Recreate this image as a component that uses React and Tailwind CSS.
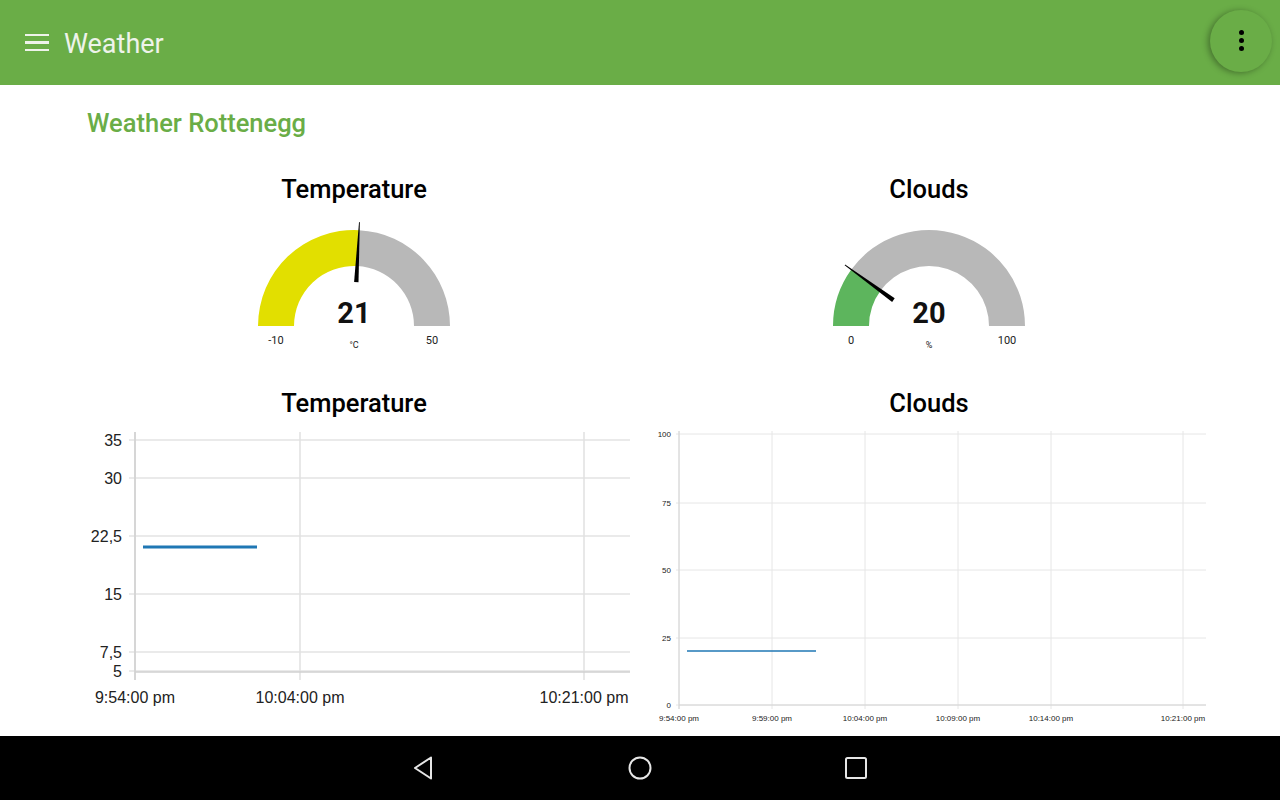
import React from 'react';

const polar = (cx, cy, r, deg) => {
  const a = (deg * Math.PI) / 180;
  return [cx + r * Math.cos(a), cy - r * Math.sin(a)];
};

const band = (cx, cy, r1, r2, from, to) => {
  const [ax, ay] = polar(cx, cy, r2, from);
  const [bx, by] = polar(cx, cy, r2, to);
  const [cx2, cy2] = polar(cx, cy, r1, to);
  const [dx, dy] = polar(cx, cy, r1, from);
  return `M${ax} ${ay} A${r2} ${r2} 0 0 1 ${bx} ${by} L${cx2} ${cy2} A${r1} ${r1} 0 0 0 ${dx} ${dy} Z`;
};

const needle = (cx, cy, deg) => {
  const a = (deg * Math.PI) / 180;
  const ux = Math.cos(a), uy = -Math.sin(a);
  const px = -uy, py = ux;
  const ix = cx + 44 * ux, iy = cy + 44 * uy;
  const ox = cx + 104 * ux, oy = cy + 104 * uy;
  return `${ix + 2.2 * px},${iy + 2.2 * py} ${ox + 0.4 * px},${oy + 0.4 * py} ${ox - 0.4 * px},${oy - 0.4 * py} ${ix - 2.2 * px},${iy - 2.2 * py}`;
};

const Gauge = ({ title, value, min, max, unit, color }) => {
  const frac = (value - min) / (max - min);
  const deg = 180 - frac * 180;
  return (
    <div className="flex flex-col items-center">
      <h2 className="text-[25.5px] font-medium text-black leading-[30px] h-[30px]">{title}</h2>
      <svg width="240" height="135" viewBox="0 0 240 135" className="mt-[16px]">
        <path d={band(120, 106, 60, 96, 180, deg)} fill={color} />
        <path d={band(120, 106, 60, 96, deg, 0)} fill="#b8b8b8" />
        <polygon points={needle(120, 106, deg)} fill="#000" />
        <text x="120" y="103" textAnchor="middle" fontSize="29" fontWeight="700" fill="#111" fontFamily="Roboto, sans-serif">{value}</text>
        <text x="42" y="124" textAnchor="middle" fontSize="11" fill="#222" fontFamily="Roboto, sans-serif">{min}</text>
        <text x="198" y="124" textAnchor="middle" fontSize="11" fill="#222" fontFamily="Roboto, sans-serif">{max}</text>
        <text x="120" y="128" textAnchor="middle" fontSize="9" fill="#222" fontFamily="Roboto, sans-serif">{unit}</text>
      </svg>
    </div>
  );
};

const TempChart = () => {
  const rows = [[440, '35'], [478, '30'], [536, '22,5'], [594, '15'], [652, '7,5'], [671, '5']];
  const cols = [[135, '9:54:00 pm'], [300, '10:04:00 pm'], [584, '10:21:00 pm']];
  return (
    <svg width="555" height="295" viewBox="80 420 555 295" fontFamily="'Liberation Sans', Arial, sans-serif">
      {rows.map(([y, t]) => (
        <g key={t}>
          <line x1="129" x2="630" y1={y} y2={y} stroke="#e3e3e3" strokeWidth="1.5" />
          <text x="122" y={y + 6} textAnchor="end" fontSize="16" fill="#222">{t}</text>
        </g>
      ))}
      {cols.map(([x, t]) => (
        <g key={t}>
          <line x1={x} x2={x} y1="432" y2="680" stroke="#e0e0e0" strokeWidth="1.5" />
          <text x={x} y="703" textAnchor="middle" fontSize="16" fill="#222">{t}</text>
        </g>
      ))}
      <line x1="135" x2="135" y1="432" y2="680" stroke="#d0d0d0" strokeWidth="1.5" />
      <line x1="135" x2="630" y1="672" y2="672" stroke="#d0d0d0" strokeWidth="1.5" />
      <line x1="143" x2="257" y1="547" y2="547" stroke="#1f77b4" strokeWidth="3" />
    </svg>
  );
};

const CloudChart = () => {
  const rows = [[434, '100'], [503, '75'], [570, '50'], [638, '25'], [705, '0']];
  const cols = [[679, '9:54:00 pm'], [772, '9:59:00 pm'], [865, '10:04:00 pm'], [958, '10:09:00 pm'], [1051, '10:14:00 pm'], [1183, '10:21:00 pm']];
  return (
    <svg width="580" height="310" viewBox="640 420 580 310" fontFamily="'Liberation Sans', Arial, sans-serif">
      {rows.map(([y, t]) => (
        <g key={t}>
          <line x1="676" x2="1206" y1={y} y2={y} stroke="#e6e6e6" strokeWidth="1" />
          <text x="671" y={y + 3} textAnchor="end" fontSize="8" fill="#222">{t}</text>
        </g>
      ))}
      {cols.map(([x, t]) => (
        <g key={t}>
          <line x1={x} x2={x} y1="431" y2="709" stroke="#e6e6e6" strokeWidth="1" />
          <text x={x} y="721" textAnchor="middle" fontSize="8" fill="#222">{t}</text>
        </g>
      ))}
      <line x1="679" x2="679" y1="431" y2="709" stroke="#d4d4d4" strokeWidth="1" />
      <line x1="679" x2="1206" y1="705" y2="705" stroke="#d4d4d4" strokeWidth="1" />
      <line x1="687" x2="816" y1="651" y2="651" stroke="#1f77b4" strokeWidth="1.6" />
    </svg>
  );
};

export default function App() {
  return (
    <div className="w-[1280px] h-[800px] flex flex-col bg-white overflow-hidden" style={{ fontFamily: 'Roboto, sans-serif' }}>
      <header className="h-[85px] shrink-0 bg-[#6aad47] flex items-center pl-[25px] pr-[8px]">
        <div className="flex flex-col gap-[5px] w-[24px]">
          <span className="block h-[2.5px] bg-[#eef3ea]" />
          <span className="block h-[2.5px] bg-[#eef3ea]" />
          <span className="block h-[2.5px] bg-[#eef3ea]" />
        </div>
        <h1 className="ml-[15px] mt-[3px] text-[27px] text-[#eef3ea] leading-none">Weather</h1>
        <div className="ml-auto mb-[4px] w-[62px] h-[62px] rounded-full bg-[#6aad47] shadow-[-2px_1px_6px_rgba(0,0,0,0.35)] flex flex-col items-center justify-center gap-[3px]">
          <span className="w-[5px] h-[5px] rounded-full bg-black" />
          <span className="w-[5px] h-[5px] rounded-full bg-black" />
          <span className="w-[5px] h-[5px] rounded-full bg-black" />
        </div>
      </header>

      <main className="flex-1 relative">
        <h2 className="ml-[87px] mt-[24px] text-[25.5px] font-medium text-[#6aad47] leading-[28px]">Weather Rottenegg</h2>

        <div className="flex mt-[37px]">
          <div className="w-[708px] flex justify-center">
            <Gauge title="Temperature" value={21} min={-10} max={50} unit="°C" color="#e2df00" />
          </div>
          <div className="w-[442px] flex justify-center">
            <Gauge title="Clouds" value={20} min={0} max={100} unit="%" color="#5db55d" />
          </div>
        </div>

        <div className="flex mt-[33px]">
          <div className="w-[708px] flex justify-center">
            <h2 className="text-[25.5px] font-medium text-black leading-[30px]">Temperature</h2>
          </div>
          <div className="w-[442px] flex justify-center">
            <h2 className="text-[25.5px] font-medium text-black leading-[30px]">Clouds</h2>
          </div>
        </div>

        <div className="flex items-start mt-[2px] ml-[80px] gap-[5px]">
          <TempChart />
          <CloudChart />
        </div>
      </main>

      <nav className="h-[64px] shrink-0 bg-black flex items-center justify-center gap-[190px]">
        <svg width="26" height="26" viewBox="0 0 26 26">
          <path d="M20 2.5 L4 13 L20 23.5 Z" fill="none" stroke="#e6e6e6" strokeWidth="2" strokeLinejoin="round" />
        </svg>
        <svg width="26" height="26" viewBox="0 0 26 26">
          <circle cx="13" cy="13" r="10.5" fill="none" stroke="#e6e6e6" strokeWidth="2" />
        </svg>
        <svg width="26" height="26" viewBox="0 0 26 26">
          <rect x="3" y="3" width="20" height="20" rx="1.5" fill="none" stroke="#e6e6e6" strokeWidth="2" />
        </svg>
      </nav>
    </div>
  );
}
